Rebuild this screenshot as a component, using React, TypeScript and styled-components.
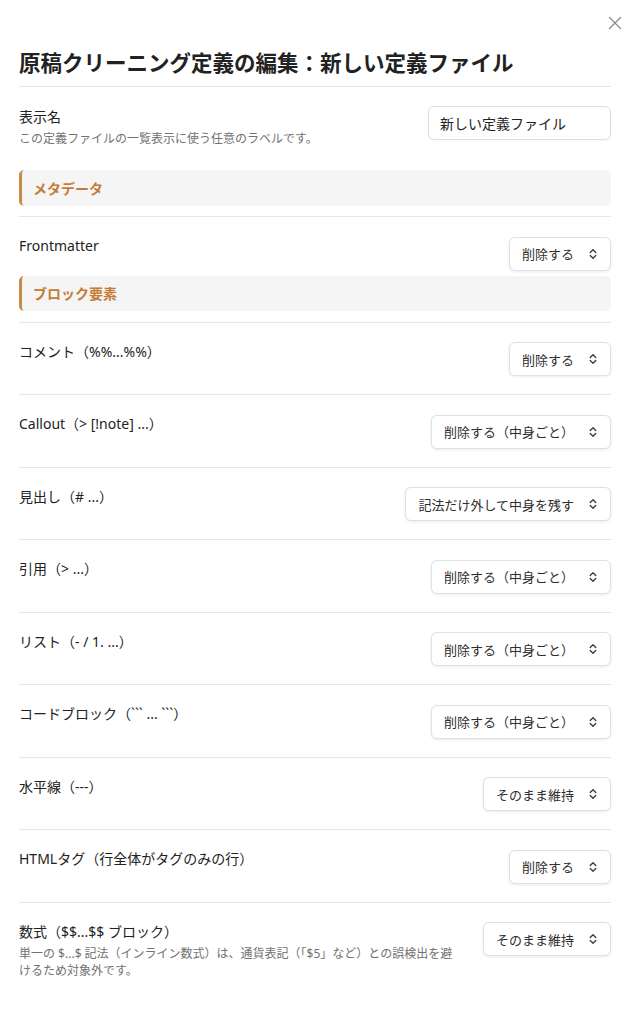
import styled, { createGlobalStyle } from "styled-components";

const GlobalStyle = createGlobalStyle`
  body {
    margin: 0;
    background: #ffffff;
    font-family: "Noto Sans", "Noto Sans CJK JP", sans-serif;
    color: #222222;
  }
`;

type Option = { label: string; value: string; desc?: string };

const rows: Option[] = [
  { label: "コメント（%%...%%）", value: "削除する" },
  { label: "Callout（> [!note] ...）", value: "削除する（中身ごと）" },
  { label: "見出し（# ...）", value: "記法だけ外して中身を残す" },
  { label: "引用（> ...）", value: "削除する（中身ごと）" },
  { label: "リスト（- / 1. ...）", value: "削除する（中身ごと）" },
  { label: "コードブロック（``` ... ```）", value: "削除する（中身ごと）" },
  { label: "水平線（---）", value: "そのまま維持" },
  { label: "HTMLタグ（行全体がタグのみの行）", value: "削除する" },
  {
    label: "数式（$$...$$ ブロック）",
    value: "そのまま維持",
    desc: "単一の $...$ 記法（インライン数式）は、通貨表記（「$5」など）との誤検出を避けるため対象外です。",
  },
];

function Chevron() {
  return (
    <svg width="10" height="14" viewBox="0 0 10 14" fill="none">
      <path d="M2.2 5.5L5 2.7L7.8 5.5" stroke="#3a3a3a" strokeWidth="1.3" strokeLinecap="round" strokeLinejoin="round" />
      <path d="M2.2 8.5L5 11.3L7.8 8.5" stroke="#3a3a3a" strokeWidth="1.3" strokeLinecap="round" strokeLinejoin="round" />
    </svg>
  );
}

function Dropdown({ value }: { value: string }) {
  return (
    <StSelect>
      <span>{value}</span>
      <StChevron>
        <Chevron />
      </StChevron>
    </StSelect>
  );
}

function App() {
  return (
    <>
      <GlobalStyle />
      <StModal>
        <StClose aria-label="close">
          <svg width="14" height="14" viewBox="0 0 14 14">
            <path d="M1.5 1.5L12.5 12.5M12.5 1.5L1.5 12.5" stroke="#8a8a8a" strokeWidth="1.3" strokeLinecap="round" />
          </svg>
        </StClose>
        <StTitle>原稿クリーニング定義の編集：新しい定義ファイル</StTitle>

        <StNameRow>
          <StInfo>
            <StLabel>表示名</StLabel>
            <StDesc>この定義ファイルの一覧表示に使う任意のラベルです。</StDesc>
          </StInfo>
          <StInput defaultValue="新しい定義ファイル" />
        </StNameRow>

        <StHeading $first>メタデータ</StHeading>
        <StRow $last>
          <StInfo>
            <StLabel>Frontmatter</StLabel>
          </StInfo>
          <Dropdown value="削除する" />
        </StRow>

        <StHeading>ブロック要素</StHeading>
        {rows.map((r) => (
          <StRow key={r.label}>
            <StInfo>
              <StLabel>{r.label}</StLabel>
              {r.desc && <StDesc>{r.desc}</StDesc>}
            </StInfo>
            <Dropdown value={r.value} />
          </StRow>
        ))}
      </StModal>
    </>
  );
}

export default App;

const StModal = styled.div`
  position: relative;
  padding: 42px 31px 40px 19px;
  min-height: 1024px;
  box-sizing: border-box;
`;

const StClose = styled.div`
  position: absolute;
  top: 13px;
  right: 20px;
  width: 14px;
  height: 14px;
`;

const StTitle = styled.h1`
  margin: 0;
  font-size: 21.5px;
  line-height: 42px;
  font-weight: 700;
  color: #222;
  padding-bottom: 2px;
  border-bottom: 1px solid #e6e6e6;
`;

const StNameRow = styled.div`
  display: flex;
  align-items: flex-start;
  justify-content: space-between;
  padding-top: 19px;
`;

const StInfo = styled.div`
  flex: 1;
  min-width: 0;
  margin-right: 22px;
`;

const StLabel = styled.div`
  font-size: 14px;
  line-height: 21px;
  color: #222;
`;

const StDesc = styled.div`
  font-size: 12px;
  line-height: 17px;
  color: #727272;
  margin-top: 3px;
`;

const StInput = styled.input`
  width: 183px;
  height: 34px;
  box-sizing: border-box;
  border: 1px solid #dedede;
  border-radius: 6px;
  padding: 0 11px;
  font-family: inherit;
  font-size: 14px;
  color: #222;
  background: #fff;
  box-shadow: 0 1px 2px rgba(0, 0, 0, 0.04);
  outline: none;
`;

const StHeading = styled.div<{ $first?: boolean }>`
  margin-top: ${(p) => (p.$first ? "23px" : "5px")};
  height: 35.5px;
  box-sizing: border-box;
  display: flex;
  align-items: center;
  padding-left: 11px;
  background: #f5f5f5;
  border-left: 3px solid #c98a4b;
  border-radius: 5px;
  font-size: 14px;
  font-weight: 700;
  color: #c47c34;
  margin-bottom: 10.5px;
`;

const StRow = styled.div<{ $last?: boolean }>`
  display: flex;
  align-items: flex-start;
  justify-content: space-between;
  padding: ${(p) => (p.$last ? "18px 0 0" : "18px 0 18px")};
  border-top: 1px solid #e6e6e6;
`;

const StSelect = styled.div`
  flex-shrink: 0;
  margin-top: 1.5px;
  height: 34px;
  box-sizing: border-box;
  display: flex;
  align-items: center;
  padding: 0 12px;
  border: 1px solid #e0e0e0;
  border-radius: 6px;
  background: #fff;
  box-shadow: 0 1px 3px rgba(0, 0, 0, 0.08);
  font-size: 13px;
  color: #2e2e2e;
  white-space: nowrap;
`;

const StChevron = styled.span`
  display: flex;
  margin-left: 14px;
`;
